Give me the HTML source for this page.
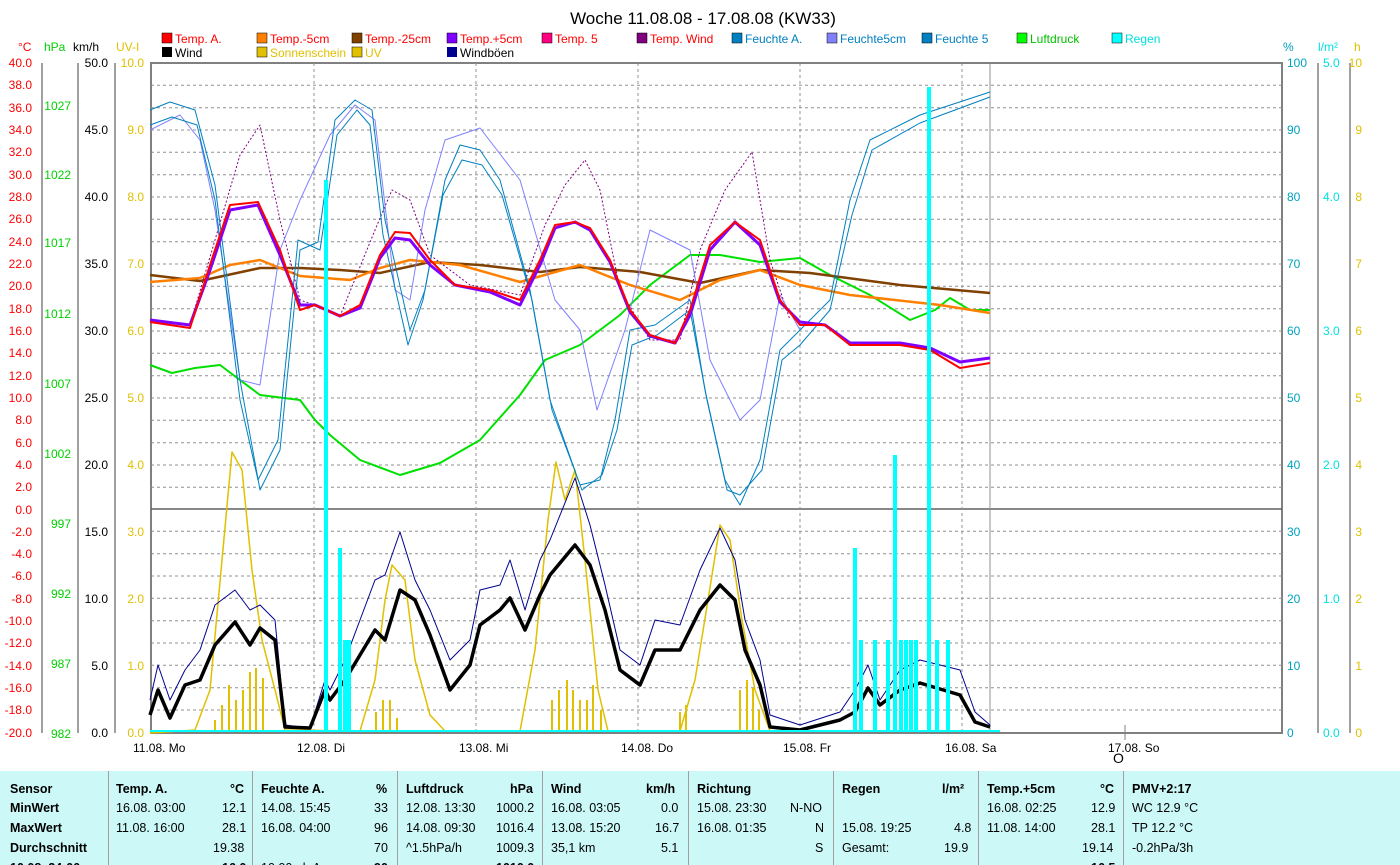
<!DOCTYPE html><html><head><style>
body{margin:0;width:1400px;height:865px;overflow:hidden;background:#fff;font-family:"Liberation Sans",sans-serif}
svg text{font-family:"Liberation Sans",sans-serif}
</style></head><body>
<svg width="1400" height="865" xmlns="http://www.w3.org/2000/svg" style="position:absolute;left:0;top:0">
<text x="703" y="24" font-size="17" text-anchor="middle">Woche 11.08.08 - 17.08.08 (KW33)</text>
<g font-size="12">
<rect x="162" y="33" width="10" height="10" fill="red" stroke="#000" stroke-width=".5"/><text x="175" y="43" fill="red">Temp. A.</text>
<rect x="257" y="33" width="10" height="10" fill="#ff8000" stroke="#000" stroke-width=".5"/><text x="270" y="43" fill="red">Temp.-5cm</text>
<rect x="352" y="33" width="10" height="10" fill="#804000" stroke="#000" stroke-width=".5"/><text x="365" y="43" fill="red">Temp.-25cm</text>
<rect x="447" y="33" width="10" height="10" fill="#8000ff" stroke="#000" stroke-width=".5"/><text x="460" y="43" fill="red">Temp.+5cm</text>
<rect x="542" y="33" width="10" height="10" fill="#ff0080" stroke="#000" stroke-width=".5"/><text x="555" y="43" fill="red">Temp. 5</text>
<rect x="637" y="33" width="10" height="10" fill="#800080" stroke="#000" stroke-width=".5"/><text x="650" y="43" fill="red">Temp. Wind</text>
<rect x="732" y="33" width="10" height="10" fill="#0080c0" stroke="#000" stroke-width=".5"/><text x="745" y="43" fill="#0080c0">Feuchte A.</text>
<rect x="827" y="33" width="10" height="10" fill="#8080ff" stroke="#000" stroke-width=".5"/><text x="840" y="43" fill="#0080c0">Feuchte5cm</text>
<rect x="922" y="33" width="10" height="10" fill="#0080c0" stroke="#000" stroke-width=".5"/><text x="935" y="43" fill="#0080c0">Feuchte 5</text>
<rect x="1017" y="33" width="10" height="10" fill="#00ff00" stroke="#000" stroke-width=".5"/><text x="1030" y="43" fill="#00c000">Luftdruck</text>
<rect x="1112" y="33" width="10" height="10" fill="#00ffff" stroke="#000" stroke-width=".5"/><text x="1125" y="43" fill="#00e0e0">Regen</text>
<rect x="162" y="47" width="10" height="10" fill="#000"/><text x="175" y="57">Wind</text>
<rect x="257" y="47" width="10" height="10" fill="#e0c000" stroke="#000" stroke-width=".5"/><text x="270" y="57" fill="#e0c000">Sonnenschein</text>
<rect x="352" y="47" width="10" height="10" fill="#e0c000" stroke="#000" stroke-width=".5"/><text x="365" y="57" fill="#e0c000">UV</text>
<rect x="447" y="47" width="10" height="10" fill="#000090"/><text x="460" y="57">Windböen</text>
<text x="18" y="51" fill="red">°C</text><text x="44" y="51" fill="#00d000">hPa</text><text x="73" y="51">km/h</text><text x="116" y="51" fill="#e0c000">UV-I</text>
<text x="1283" y="51" fill="#00a0c0">%</text><text x="1318" y="51" fill="#00e0e0">l/m²</text><text x="1354" y="51" fill="#e0c000">h</text>
</g>
<g stroke="#808080" stroke-width="1.5" fill="none">
<line x1="42" y1="63" x2="42" y2="733"/><line x1="78" y1="63" x2="78" y2="733"/><line x1="115" y1="63" x2="115" y2="733"/>
<line x1="1318" y1="63" x2="1318" y2="733"/><line x1="1350" y1="63" x2="1350" y2="733"/>
<rect x="151" y="63" width="1131" height="670" stroke-width="2"/>
<line x1="151" y1="509" x2="1282" y2="509" stroke="#606060"/>
<line x1="990" y1="63" x2="990" y2="733" stroke="#909090" stroke-width="1"/>
</g>
<g stroke="#909090" stroke-dasharray="3,3" stroke-width="1">
<path d="M151 85.3H1282M151 107.7H1282M151 130H1282M151 152.3H1282M151 174.7H1282M151 197H1282M151 219.3H1282M151 241.7H1282M151 264H1282M151 286.3H1282M151 308.7H1282M151 331H1282M151 353.3H1282M151 375.7H1282M151 398H1282M151 420.3H1282M151 442.7H1282M151 465H1282M151 487.3H1282M151 531.3H1282M151 553.7H1282M151 576H1282M151 598.3H1282M151 620.7H1282M151 643H1282M151 665.3H1282M151 687.7H1282M151 710H1282"/>
<path d="M314 63V733M476 63V733M638 63V733M800 63V733M962 63V733"/>
</g>
<line x1="1125" y1="725" x2="1125" y2="740" stroke="#808080"/>
<g font-size="12" fill="red" text-anchor="end">
<text x="32" y="67">40.0</text><text x="32" y="89">38.0</text><text x="32" y="112">36.0</text><text x="32" y="134">34.0</text><text x="32" y="156">32.0</text><text x="32" y="179">30.0</text><text x="32" y="201">28.0</text><text x="32" y="223">26.0</text><text x="32" y="246">24.0</text><text x="32" y="268">22.0</text><text x="32" y="290">20.0</text><text x="32" y="313">18.0</text><text x="32" y="335">16.0</text><text x="32" y="357">14.0</text><text x="32" y="380">12.0</text><text x="32" y="402">10.0</text><text x="32" y="424">8.0</text><text x="32" y="447">6.0</text><text x="32" y="469">4.0</text><text x="32" y="491">2.0</text><text x="32" y="514">0.0</text><text x="32" y="536">-2.0</text><text x="32" y="558">-4.0</text><text x="32" y="580">-6.0</text><text x="32" y="603">-8.0</text><text x="32" y="625">-10.0</text><text x="32" y="647">-12.0</text><text x="32" y="670">-14.0</text><text x="32" y="692">-16.0</text><text x="32" y="714">-18.0</text><text x="32" y="737">-20.0</text>
</g>
<g font-size="12" fill="#00d000" text-anchor="end">
<text x="71" y="110">1027</text><text x="71" y="179">1022</text><text x="71" y="247">1017</text><text x="71" y="318">1012</text><text x="71" y="388">1007</text><text x="71" y="458">1002</text><text x="71" y="528">997</text><text x="71" y="598">992</text><text x="71" y="668">987</text><text x="71" y="738">982</text>
</g>
<g font-size="12" text-anchor="end">
<text x="108" y="67">50.0</text><text x="108" y="134">45.0</text><text x="108" y="201">40.0</text><text x="108" y="268">35.0</text><text x="108" y="335">30.0</text><text x="108" y="402">25.0</text><text x="108" y="469">20.0</text><text x="108" y="536">15.0</text><text x="108" y="603">10.0</text><text x="108" y="670">5.0</text><text x="108" y="737">0.0</text>
</g>
<g font-size="12" fill="#e0c000" text-anchor="end">
<text x="144" y="67">10.0</text><text x="144" y="134">9.0</text><text x="144" y="201">8.0</text><text x="144" y="268">7.0</text><text x="144" y="335">6.0</text><text x="144" y="402">5.0</text><text x="144" y="469">4.0</text><text x="144" y="536">3.0</text><text x="144" y="603">2.0</text><text x="144" y="670">1.0</text><text x="144" y="737">0.0</text>
<text x="1362" y="67">10</text><text x="1362" y="134">9</text><text x="1362" y="201">8</text><text x="1362" y="268">7</text><text x="1362" y="335">6</text><text x="1362" y="402">5</text><text x="1362" y="469">4</text><text x="1362" y="536">3</text><text x="1362" y="603">2</text><text x="1362" y="670">1</text><text x="1362" y="737">0</text>
</g>
<g font-size="12" fill="#00a0c0">
<text x="1287" y="67">100</text><text x="1287" y="134">90</text><text x="1287" y="201">80</text><text x="1287" y="268">70</text><text x="1287" y="335">60</text><text x="1287" y="402">50</text><text x="1287" y="469">40</text><text x="1287" y="536">30</text><text x="1287" y="603">20</text><text x="1287" y="670">10</text><text x="1287" y="737">0</text>
</g>
<g font-size="12" fill="#00e0e0">
<text x="1323" y="67">5.0</text><text x="1323" y="201">4.0</text><text x="1323" y="335">3.0</text><text x="1323" y="469">2.0</text><text x="1323" y="603">1.0</text><text x="1323" y="737">0.0</text>
</g>
<g font-size="12">
<text x="133" y="752">11.08. Mo</text><text x="297" y="752">12.08. Di</text><text x="459" y="752">13.08. Mi</text><text x="621" y="752">14.08. Do</text><text x="783" y="752">15.08. Fr</text><text x="945" y="752">16.08. Sa</text><text x="1108" y="752">17.08. So</text>
<text x="1113" y="763" font-size="14">O</text>
</g>
<g fill="none" stroke-linejoin="round">
<polyline stroke="#e0c000" stroke-width="1.5" points="150,733 195,730 210,690 222,560 232,452 242,470 252,570 262,640 275,690 285,730 360,731 375,680 385,600 392,565 405,580 415,660 430,715 445,731 520,731 535,650 548,520 556,462 565,500 575,470 585,560 598,690 608,731 680,731 695,680 708,600 720,525 730,540 742,620 755,690 770,731 1000,731"/>
<g stroke="#e0c000" stroke-width="2"><path d="M215 731V720M222 731V705M229 731V685M236 731V700M243 731V690M250 731V672M256 731V668M263 731V678M376 731V712M383 731V700M390 731V700M397 731V718M552 731V700M559 731V690M567 731V680M573 731V690M580 731V700M587 731V700M593 731V685M601 731V710M680 731V712M686 731V705M740 731V690M747 731V680M753 731V688M759 731V710"/></g>
<polyline stroke="#00e000" stroke-width="2" points="150,365 172,373 195,368 220,365 240,380 260,395 300,400 315,420 330,435 360,460 400,475 440,463 480,440 520,395 545,360 580,345 620,315 650,285 690,255 720,255 760,262 800,258 830,275 870,295 910,320 935,310 950,298 970,310 990,310"/>
<polyline stroke="#804000" stroke-width="2.5" points="150,275 200,281 260,268 300,268 340,270 380,273 430,262 480,265 540,272 580,267 640,272 700,283 760,270 810,273 900,285 990,293"/>
<polyline stroke="#ff8000" stroke-width="2.5" points="150,282 200,278 230,265 260,260 300,276 350,280 380,268 410,260 460,265 520,282 580,265 630,285 680,300 720,280 760,270 800,285 850,295 940,305 990,313"/>
<polyline stroke="#800080" stroke-width="1" stroke-dasharray="2,2" points="150,320 190,325 215,240 240,155 260,125 280,220 300,300 315,305 340,316 375,230 392,190 410,200 430,255 470,285 520,295 545,225 565,185 585,160 600,190 620,290 650,340 680,340 700,250 725,190 752,152 770,260 790,320"/>
<polyline stroke="#8080ff" stroke-width="1" points="150,130 180,115 200,140 215,210 240,380 260,385 280,250 300,200 330,135 355,105 375,120 395,290 410,300 425,210 445,140 480,128 520,180 555,300 580,330 597,410 625,330 650,230 690,250 710,360 740,420 760,400 780,295 800,330"/>
<polyline stroke="#0080c0" stroke-width="1" points="150,110 170,102 195,110 215,185 240,380 260,490 280,450 300,250 318,242 335,120 355,100 372,110 385,220 410,330 425,290 445,180 460,145 480,150 500,180 530,290 550,400 580,485 600,480 615,420 630,330 655,325 690,300 705,390 725,480 740,505 760,460 780,350 800,330 830,300 850,200 870,140 920,115 990,92"/>
<polyline stroke="#0080c0" stroke-width="1" points="150,125 172,117 197,125 215,200 240,400 258,480 278,440 298,240 320,250 337,135 357,110 370,125 383,235 408,345 423,300 443,195 462,160 482,165 502,195 532,300 552,410 582,490 602,475 617,430 632,345 657,335 690,310 707,400 727,490 740,495 762,470 782,360 800,345 830,310 852,215 872,150 920,123 990,97"/>
<polyline stroke="#8000ff" stroke-width="3" points="150,320 190,325 210,270 230,210 258,205 280,255 300,305 315,305 340,316 360,308 380,258 395,238 410,240 430,265 455,285 490,292 520,305 540,265 555,228 575,222 590,230 610,262 630,312 650,336 675,343 690,315 710,250 735,222 760,245 780,302 800,322 825,325 850,343 900,343 930,348 960,362 990,358"/>
<polyline stroke="#ff0000" stroke-width="2" points="150,322 190,328 210,265 230,205 258,202 280,250 300,310 315,305 340,316 360,305 380,255 395,232 410,233 430,260 455,285 490,290 520,300 540,260 555,225 575,222 590,228 610,260 630,310 650,335 675,343 690,310 710,245 735,222 760,240 780,300 800,325 825,325 850,345 900,345 930,350 960,368 990,363"/>
<polyline stroke="#000090" stroke-width="1" points="150,700 158,665 170,700 185,670 200,650 215,605 235,590 250,610 260,605 275,620 285,725 310,728 325,680 330,690 345,660 360,620 375,580 385,575 400,532 415,580 430,610 450,660 470,640 480,590 500,585 510,560 525,610 540,560 550,540 575,478 590,525 605,585 620,650 640,665 655,620 680,625 700,570 720,528 735,560 745,620 760,660 770,715 800,725 840,712 855,690 868,665 880,700 900,670 920,660 960,670 975,712 990,725"/>
<polyline stroke="#000" stroke-width="3.5" points="150,715 158,690 170,718 185,685 200,680 215,645 235,622 250,645 260,628 275,640 285,727 310,728 325,690 330,700 345,680 360,655 375,630 385,640 400,590 415,600 430,635 450,690 470,665 480,625 500,610 510,598 525,630 540,595 550,575 575,545 590,565 605,610 620,670 640,685 655,650 680,650 700,610 720,585 735,600 745,650 760,685 770,727 800,730 840,720 855,712 868,688 880,705 900,690 920,683 960,695 975,722 990,727"/>
<line x1="150" y1="731" x2="1000" y2="731" stroke="#00ffff" stroke-width="2"/>
<g stroke="#00ffff" stroke-width="4"><path d="M326 731V180M340 731V548M345 731V640M349 731V640M855 731V548M861 731V640M875 731V640M888 731V640M895 731V455M901 731V640M906 731V640M911 731V640M916 731V640M929 731V87M937 731V640M948 731V640"/></g>
</g>
</svg>
<div style="position:absolute;left:0;top:771px;width:1400px;height:94px;overflow:hidden;background:#ccf8f8;font-size:12.5px">
<style>.c{position:absolute;top:0;height:94px;border-left:1px solid #a0a0a0}.r{position:absolute;white-space:nowrap}.b{font-weight:bold}</style>
<div class="c" style="left:108px"></div><div class="c" style="left:252px"></div><div class="c" style="left:397px"></div><div class="c" style="left:542px"></div><div class="c" style="left:688px"></div><div class="c" style="left:833px"></div><div class="c" style="left:978px"></div><div class="c" style="left:1123px"></div>
<div class="r b" style="left:10px;top:11px">Sensor</div><div class="r b" style="left:10px;top:30px">MinWert</div><div class="r b" style="left:10px;top:50px">MaxWert</div><div class="r b" style="left:10px;top:70px">Durchschnitt</div><div class="r b" style="left:10px;top:90px">10.08. 24:00</div>
<div class="r b" style="left:116px;top:11px">Temp. A.</div><div class="r b" style="left:230px;top:11px">°C</div>
<div class="r" style="left:116px;top:30px">16.08. 03:00</div><div class="r" style="left:222px;top:30px">12.1</div>
<div class="r" style="left:116px;top:50px">11.08. 16:00</div><div class="r" style="left:222px;top:50px">28.1</div>
<div class="r" style="left:213px;top:70px">19.38</div><div class="r b" style="left:222px;top:90px">16.0</div>
<div class="r b" style="left:261px;top:11px">Feuchte A.</div><div class="r b" style="left:376px;top:11px">%</div>
<div class="r" style="left:261px;top:30px">14.08. 15:45</div><div class="r" style="left:374px;top:30px">33</div>
<div class="r" style="left:261px;top:50px">16.08. 04:00</div><div class="r" style="left:374px;top:50px">96</div>
<div class="r" style="left:374px;top:70px">70</div><div class="r" style="left:261px;top:90px">10.00 ab A</div><div class="r b" style="left:374px;top:90px">90</div>
<div class="r b" style="left:406px;top:11px">Luftdruck</div><div class="r b" style="left:510px;top:11px">hPa</div>
<div class="r" style="left:406px;top:30px">12.08. 13:30</div><div class="r" style="left:496px;top:30px">1000.2</div>
<div class="r" style="left:406px;top:50px">14.08. 09:30</div><div class="r" style="left:496px;top:50px">1016.4</div>
<div class="r" style="left:406px;top:70px">^1.5hPa/h</div><div class="r" style="left:496px;top:70px">1009.3</div><div class="r b" style="left:496px;top:90px">1010.0</div>
<div class="r b" style="left:551px;top:11px">Wind</div><div class="r b" style="left:646px;top:11px">km/h</div>
<div class="r" style="left:551px;top:30px">16.08. 03:05</div><div class="r" style="left:661px;top:30px">0.0</div>
<div class="r" style="left:551px;top:50px">13.08. 15:20</div><div class="r" style="left:655px;top:50px">16.7</div>
<div class="r" style="left:551px;top:70px">35,1 km</div><div class="r" style="left:661px;top:70px">5.1</div>
<div class="r b" style="left:697px;top:11px">Richtung</div>
<div class="r" style="left:697px;top:30px">15.08. 23:30</div><div class="r" style="left:790px;top:30px">N-NO</div>
<div class="r" style="left:697px;top:50px">16.08. 01:35</div><div class="r" style="left:815px;top:50px">N</div>
<div class="r" style="left:815px;top:70px">S</div>
<div class="r b" style="left:842px;top:11px">Regen</div><div class="r b" style="left:942px;top:11px">l/m²</div>
<div class="r" style="left:842px;top:50px">15.08. 19:25</div><div class="r" style="left:954px;top:50px">4.8</div>
<div class="r" style="left:842px;top:70px">Gesamt:</div><div class="r" style="left:944px;top:70px">19.9</div>
<div class="r b" style="left:987px;top:11px">Temp.+5cm</div><div class="r b" style="left:1100px;top:11px">°C</div>
<div class="r" style="left:987px;top:30px">16.08. 02:25</div><div class="r" style="left:1091px;top:30px">12.9</div>
<div class="r" style="left:987px;top:50px">11.08. 14:00</div><div class="r" style="left:1091px;top:50px">28.1</div>
<div class="r" style="left:1082px;top:70px">19.14</div><div class="r b" style="left:1091px;top:90px">16.5</div>
<div class="r b" style="left:1132px;top:11px">PMV+2:17</div>
<div class="r" style="left:1132px;top:30px">WC 12.9 °C</div>
<div class="r" style="left:1132px;top:50px">TP 12.2 °C</div>
<div class="r" style="left:1132px;top:70px">-0.2hPa/3h</div>
</div>
</body></html>
